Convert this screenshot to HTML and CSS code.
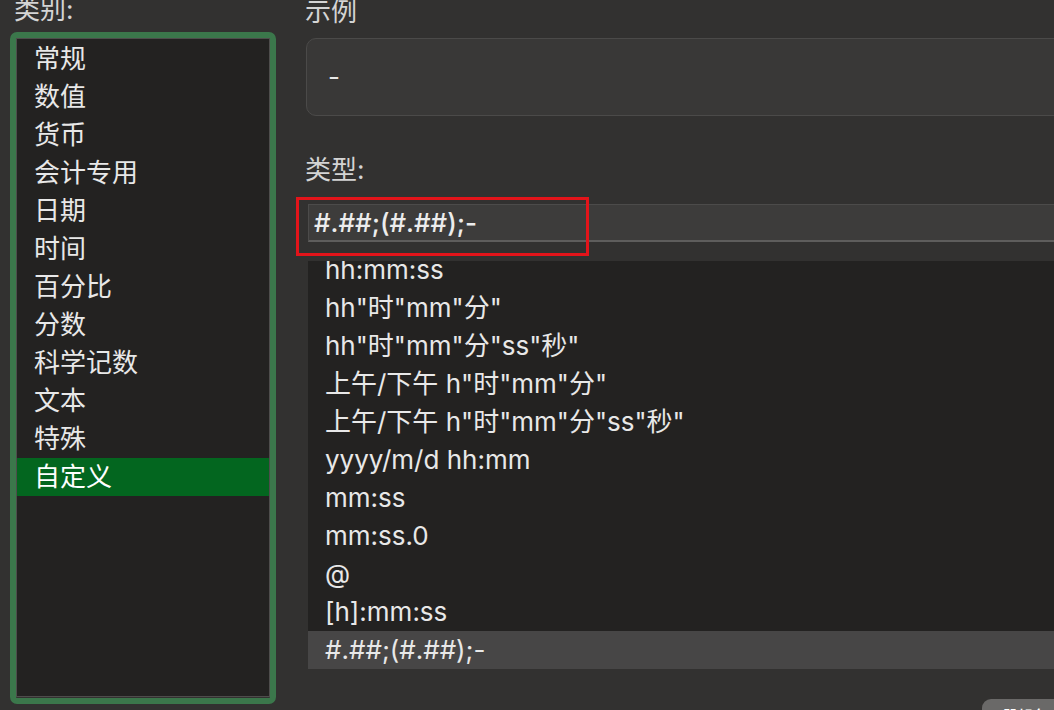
FILE: index.html
```html
<!DOCTYPE html>
<html lang="zh-CN">
<head>
<meta charset="utf-8">
<link rel="stylesheet" href="styles.css">
</head>
<body>
<div class="dialog">
  <section class="left">
    <div class="label">类别:</div>
    <div class="cat-box">
      <ul class="cat-list">
        <li>常规</li>
        <li>数值</li>
        <li>货币</li>
        <li>会计专用</li>
        <li>日期</li>
        <li>时间</li>
        <li>百分比</li>
        <li>分数</li>
        <li>科学记数</li>
        <li>文本</li>
        <li>特殊</li>
        <li class="selected">自定义</li>
      </ul>
    </div>
  </section>
  <section class="right">
    <div class="label">示例</div>
    <div class="sample">-</div>
    <div class="label type-label">类型:</div>
    <div class="input-wrap">
      <div class="type-input">#.##;(#.##);-</div>
      <div class="highlight"></div>
    </div>
    <div class="fmt-list">
      <ul class="fmt-inner">
        <li>hh:mm:ss</li>
        <li>hh"时"mm"分"</li>
        <li>hh"时"mm"分"ss"秒"</li>
        <li>上午/下午 h"时"mm"分"</li>
        <li>上午/下午 h"时"mm"分"ss"秒"</li>
        <li>yyyy/m/d hh:mm</li>
        <li>mm:ss</li>
        <li>mm:ss.0</li>
        <li>@</li>
        <li>[h]:mm:ss</li>
        <li class="selected">#.##;(#.##);-</li>
      </ul>
    </div>
    <div class="actions">
      <button class="btn">删除</button>
    </div>
  </section>
</div>
</body>
</html>
```

FILE: styles.css
```css
html, body {
  margin: 0;
  padding: 0;
  width: 1054px;
  height: 710px;
  overflow: hidden;
  background: #323130;
}
body {
  font-family: Inter, "Noto Sans CJK SC", sans-serif;
  font-size: 26px;
  color: #e6e6e6;
}
ul {
  list-style: none;
  margin: 0;
  padding: 0;
}
.dialog {
  display: flex;
  align-items: flex-start;
}
.left {
  width: 266px;
  padding-left: 10px;
  flex: none;
}
.label {
  color: #d4d4d4;
  line-height: 26px;
  height: 26px;
  margin-top: -3px;
  padding-left: 4px;
}
.cat-box {
  margin-top: 9px;
  height: 660px;
  border: 6px solid #3b774b;
  border-radius: 7px;
}
.cat-list {
  height: 656px;
  border: 1px solid #4e4d4c;
  background: #232221;
  padding-top: 1px;
}
.cat-list li {
  height: 38px;
  line-height: 38px;
  padding-left: 17px;
  color: #e8e8e8;
}
.cat-list li.selected {
  background: #03661f;
  color: #ffffff;
}
.right {
  margin-left: 29px;
  width: 800px;
  flex: none;
}
.right .label {
  padding-left: 0;
  margin-top: -1px;
}
.sample {
  margin-top: 13px;
  margin-left: 1px;
  height: 76px;
  border: 1px solid #4b4a49;
  border-radius: 10px;
  background: #393837;
  line-height: 76px;
  padding-left: 21px;
  color: #e8e8e8;
}
.right .type-label {
  margin-top: 41px;
}
.input-wrap {
  position: relative;
  margin-top: 21px;
  margin-left: 3px;
}
.type-input {
  height: 35px;
  line-height: 35px;
  background: #3d3c3b;
  border-top: 1px solid #4c4b4a;
  border-left: 1px solid #4c4b4a;
  border-bottom: 2px solid #5e5d5c;
  padding-left: 5px;
  font-weight: 500;
  color: #ececec;
}
.highlight {
  position: absolute;
  left: -12px;
  top: -7px;
  width: 287px;
  height: 53px;
  border: 3px solid #e3141a;
  pointer-events: none;
}
.fmt-list {
  margin-top: 19px;
  margin-left: 3px;
  height: 408px;
  overflow: hidden;
  background: #232221;
}
.fmt-inner {
  margin-top: -10px;
}
.fmt-inner li {
  height: 38px;
  line-height: 38px;
  padding-left: 17px;
  color: #e8e8e8;
  white-space: nowrap;
}
.fmt-inner li.selected {
  background: #474646;
}
.actions {
  margin-top: 30px;
  padding-left: 677px;
}
.btn {
  font-family: Inter, "Noto Sans CJK SC", sans-serif;
  font-size: 22px;
  line-height: 30px;
  height: 40px;
  padding: 0 20px;
  border: none;
  border-radius: 9px;
  background: #6a6968;
  color: #ffffff;
}
```
